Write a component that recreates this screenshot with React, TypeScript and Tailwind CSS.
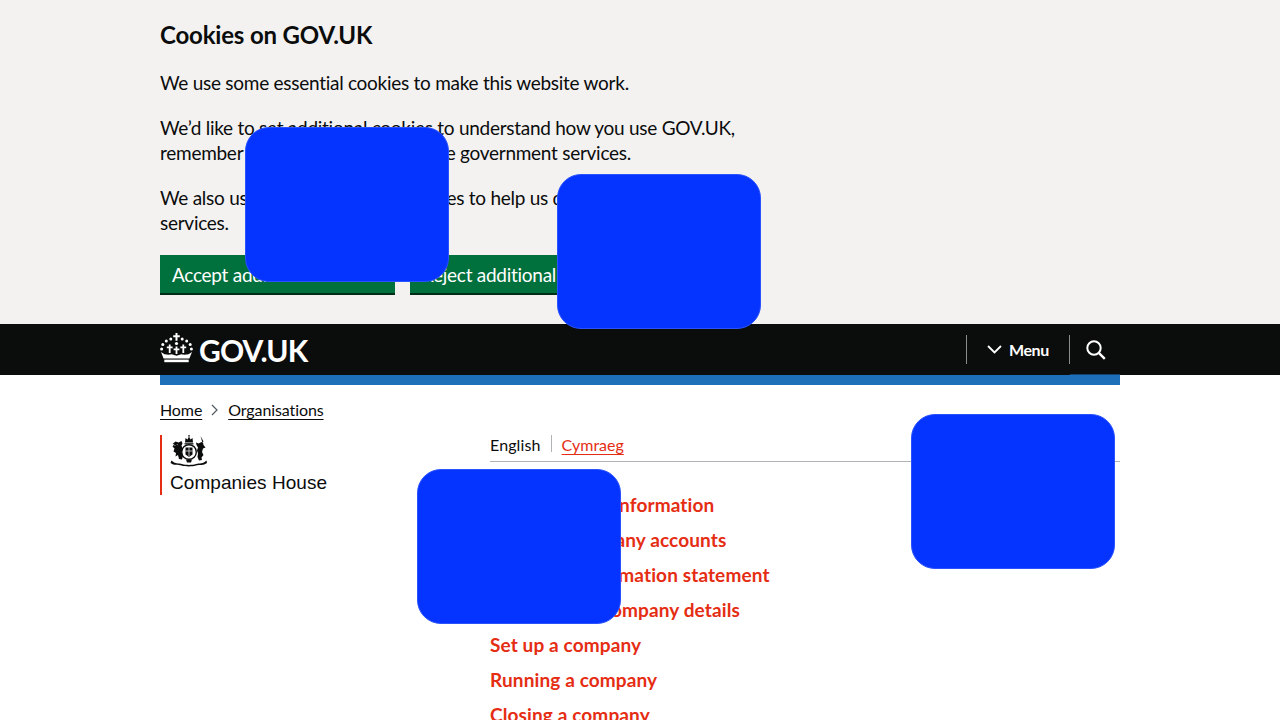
const Crown = () => (
  <svg className="-translate-y-[2px]" width="33" height="30" viewBox="0 0 33 30" fill="#fff" aria-hidden="true">
    <path d="M15.500 0h2v2.300h2.300v2h-2.300v3.500h-2V4.300h-2.300v-2h2.300z" />
    <g>
      <circle cx="10.800" cy="6" r="1.500" /><circle cx="22.200" cy="6" r="1.500" />
      <circle cx="6.300" cy="8" r="1.500" /><circle cx="26.700" cy="8" r="1.500" />
      <circle cx="2.800" cy="11.500" r="1.500" /><circle cx="30.200" cy="11.500" r="1.500" />
      <circle cx="1.600" cy="16" r="1.500" /><circle cx="31.400" cy="16" r="1.500" />
      <circle cx="16.500" cy="10.500" r="1.600" />
    </g>
    <path d="M8.800 11.500h1.800v2h2v1.800h-2v4.700H8.800v-4.700h-2v-1.800h2zM22.400 11.500h1.800v2h2v1.800h-2v4.700h-1.800v-4.700h-2v-1.800h2zM15.600 13.500h1.800v2h2v1.800h-2v3.700h-1.800v-3.700h-2v-1.800h2z" />
    <path d="M1 19l3.500 2.200 4 .6 3.200-.6 4.800 1.600 4.800-1.600 3.200.6 4-.6L32 19l-2.600 6.500H3.600z" />
    <path d="M4.300 26.600h24.400v2.600H4.300z" />
  </svg>
);

const Arms = () => (
  <svg width="38" height="33" viewBox="0 0 38 33" fill="#0b0c0c" aria-hidden="true">
    <path d="M15.500 3l2 1.500L19 1.500l1.500 3 2-1.500.5 4.500h-8z" />
    <circle cx="19" cy=".9" r=".8" />
    <path d="M14.500 8.200h9v1.200h-9z" />
    <circle cx="19" cy="17" r="7.300" fill="none" stroke="#0b0c0c" strokeWidth="1.400" />
    <path d="M15.500 12.500h7v7l-3.500 2.500-3.500-2.500z" />
    <path d="M15.500 16h7M19 12.500v9" stroke="#fff" strokeWidth=".7" />
    <path d="M2.500 9l3-2.500 3 1 3-1.500 1 2.500-1 2 1 3-1 3.500 1.500 4-1 3.500-3-.5-1-4-2.500 1.500.5-3.500-2.500-1.500 1-3-2-2 1.500-2.500z" />
    <path d="M3.500 10l2 .5M7 9l.7 1.200" stroke="#fff" strokeWidth=".5" fill="none" />
    <path d="M26 7.500l2.500 1 3-1.500 1.500.5.500 2.500 2 2.500-2.500 1-1 3.500 1.500 3-2 2.500.5 2.500-3 .5-1.500-3.500.5-3.500-1-3 1-3-1.500-2.500z" />
    <path d="M30.500 1l3 5.500-1.200.7z" />
    <path d="M1.500 25.500c3.500 3.500 7 2.500 10.500 3.500 4 1.200 10 1.200 14 0 3.500-1 7 0 10.500-3.500l.5 2.500c-3.500 2.700-7.500 1.500-11 2.600-4 1.200-10.500 1.200-14.500 0-3.500-1.100-7.500.1-11-2.600z" />
    <path d="M16 24.500h6l-1 3h-4z" />
  </svg>
);

const Blob = ({ className }: { className: string }) => (
  <div className={`absolute w-[204px] h-[155px] rounded-[24px] bg-[#0533ff] border border-[#2a52ff] ${className}`} />
);

const links = [
  "Find company information",
  "File your company accounts",
  "File your confirmation statement",
  "Change your company details",
  "Set up a company",
  "Running a company",
  "Closing a company",
];

export default function App() {
  return (
    <div className="relative h-screen overflow-hidden bg-white text-[#0b0c0c] font-['Lato',sans-serif]">
      <div className="h-[324px] bg-[#f3f2f1] px-[160px] pt-[20px]">
        <h2 className="text-[24px] leading-[30px] font-bold tracking-[-0.18px]">Cookies on GOV.UK</h2>
        <div className="mt-[20px] w-[630px] text-[19px] leading-[25px] tracking-[-0.27px]">
          <p>We use some essential cookies to make this website work.</p>
          <p className="mt-[20px]">We’d like to set additional cookies to understand how you use GOV.UK, remember your settings and improve government services.</p>
          <p className="mt-[20px]">We also use cookies set by other sites to help us deliver content from their services.</p>
        </div>
        <div className="mt-[20px] flex gap-[15px] text-[19px] leading-[25px] tracking-[-0.27px] text-white">
          <button className="h-[40px] w-[235px] bg-[#00703c] border-b-2 border-[#002d18] pl-[12px] text-left">Accept additional cookies</button>
          <button className="h-[40px] w-[235px] bg-[#00703c] border-b-2 border-[#002d18] pl-[12px] text-left">Reject additional cookies</button>
        </div>
      </div>

      <header className="h-[51px] bg-[#0b0c0c] px-[160px] flex items-center text-white">
        <div className="flex items-center gap-[6px]">
          <Crown />
          <span className="text-[30px] leading-none font-bold tracking-[-0.85px]">GOV.UK</span>
        </div>
        <div className="ml-auto flex items-center mr-[14px]">
          <div className="h-[29px] border-l border-[#8a8b8b]" />
          <div className="flex items-center w-[102px] pl-[20px] gap-[7px] font-bold text-[16px] tracking-[-0.4px]">
            <svg width="15" height="9" viewBox="0 0 15 9" fill="none" stroke="#fff" strokeWidth="1.800"><path d="M1 1l6.500 6.500L14 1" /></svg>
            Menu
          </div>
          <div className="h-[29px] border-l border-[#8a8b8b]" />
          <svg className="ml-[15px]" width="21" height="21" viewBox="0 0 21 21" fill="none" stroke="#fff" strokeWidth="2"><circle cx="9" cy="9" r="6.700" /><path d="M13.800 13.800l6 6" strokeWidth="2.400" /></svg>
        </div>
      </header>

      <div className="mx-[160px] h-[10px] bg-[#1d70b8]" />

      <div className="px-[160px]">
        <nav className="mt-[15px] h-[20px] flex items-center text-[16px] leading-[20px] tracking-[-0.1px]">
          <a className="underline underline-offset-[3px] decoration-1">Home</a>
          <svg className="mx-[8px]" width="10" height="12" viewBox="0 0 10 12" fill="none" stroke="#505a5f" strokeWidth="1.200"><path d="M2 1l5 5-5 5" /></svg>
          <a className="underline underline-offset-[3px] decoration-1">Organisations</a>
        </nav>

        <div className="mt-[15px] flex">
          <div className="w-[330px] shrink-0">
            <div className="h-[60px] w-fit border-l-2 border-[#e52d13] pl-[8px]">
              <Arms />
              <div className="mt-[3px] font-['Liberation_Sans',sans-serif] text-[19px] leading-[24px] tracking-[0.05px]">Companies House</div>
            </div>
          </div>
          <div className="flex-1">
            <div className="h-[27px] border-b border-[#b1b4b6] flex items-start text-[16px] leading-[20px]">
              <span className="pr-[10px] tracking-[0.12px]">English</span>
              <span className="h-[17px] border-l border-[#b1b4b6]" />
              <a className="pl-[10px] text-[#e52d13] underline underline-offset-[3px] decoration-1">Cymraeg</a>
            </div>
            <ul className="mt-[30px] text-[19px] leading-[25px] font-bold tracking-[0.12px] text-[#e52d13] flex flex-col gap-[10px]">
              {links.map((l) => <li key={l}>{l}</li>)}
            </ul>
          </div>
        </div>
      </div>

      <div className="absolute left-[1070px] top-[374px] w-[50px] h-px bg-[#12436d]" />
      <Blob className="left-[244.500px] top-[126.500px]" />
      <Blob className="left-[556.500px] top-[173.500px]" />
      <Blob className="left-[910.500px] top-[413.500px]" />
      <Blob className="left-[416.500px] top-[468.500px]" />
    </div>
  );
}
